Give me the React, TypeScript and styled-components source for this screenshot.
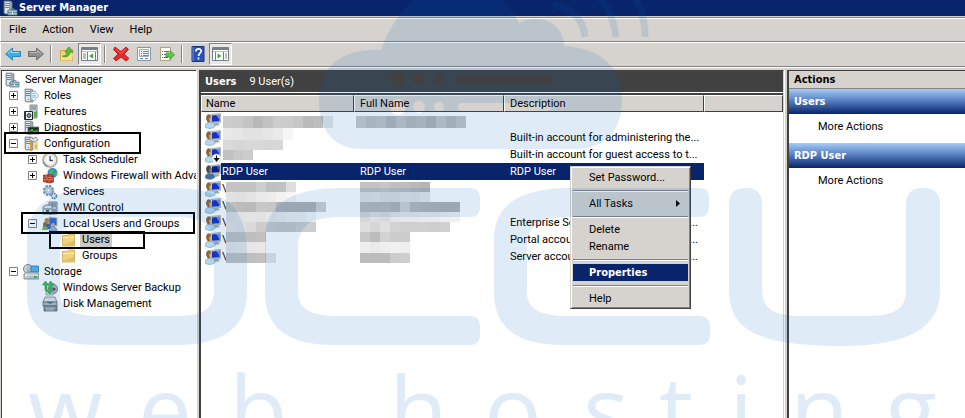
import React from 'react';
import styled, { createGlobalStyle, css } from 'styled-components';

const face = '#d6d3ce';
const navy = '#08246b';
const shadow = '#848284';
const dark = '#424142';
const boldFont = 'Tahoma, "DejaVu Sans Condensed", "DejaVu Sans", sans-serif';

const GlobalStyle = createGlobalStyle`
  *, *::before, *::after { box-sizing: border-box; }
  body { margin: 0; background: ${face}; }
  body, button { font: 11px/16px Tahoma, Roboto, sans-serif; color: #000; }
  button { margin: 0; padding: 0; border: 0; background: none; text-align: left; }
  ul { list-style: none; margin: 0; padding: 0; }
  h1, h2, h3 { margin: 0; font-size: 11px; font-weight: bold; font-family: ${boldFont}; }
`;

const Window = styled.div`
  position: relative;
  display: flex;
  flex-direction: column;
  height: 100vh;
  overflow: hidden;
  background: ${face};
`;

const TitleBar = styled.header`
  display: flex;
  align-items: center;
  flex: none;
  gap: 1px;
  height: 16px;
  padding-left: 2px;
  color: #fff;
  background: ${navy};
  overflow: hidden;
  h1 { line-height: 14px; }
`;

const MenuBar = styled.nav`
  display: flex;
  flex: none;
  align-items: center;
  gap: 16px;
  height: 24px;
  margin-top: 1px;
  padding-left: 8px;
  border-top: 1px solid ${shadow};
  border-left: 1px solid #fff;
  box-shadow: inset 0 1px #fff;
`;

const ToolBar = styled.div`
  display: flex;
  flex: none;
  align-items: center;
  height: 26px;
  border-top: 1px solid ${shadow};
  border-bottom: 1px solid ${shadow};
  border-left: 1px solid #fff;
  box-shadow: inset 0 1px #fff, 0 1px #fff;
`;

const ToolButton = styled.button<{ $pressed?: boolean }>`
  display: flex;
  align-items: center;
  justify-content: center;
  width: 23px;
  height: 22px;
  ${p => p.$pressed && css`
    border: 1px solid;
    border-color: ${shadow} #fff #fff ${shadow};
    background: #ebe9e6;
  `}
`;

const ToolSeparator = styled.span`
  width: 2px;
  height: 18px;
  margin: 0 3px;
  border-left: 1px solid ${shadow};
  border-right: 1px solid #fff;
`;

const Panes = styled.main`
  display: flex;
  flex: 1;
  min-height: 0;
  gap: 3px;
  padding: 3px 0 0 1px;
`;

const Pane = styled.section`
  border-top: 1px solid ${dark};
  border-left: 1px solid ${dark};
  background: #fff;
  overflow: hidden;
`;

const TreePane = styled(Pane)`
  flex: none;
  width: 195px;
  padding-top: 1px;
  box-shadow: 1px 0 #fff;
`;

const ListPane = styled(Pane)`
  flex: 1;
  min-width: 0;
  border-left-width: 2px;
  border-right: 1px solid ${face};
  box-shadow: 1px 0 #fff;
  position: relative;
`;

const ActionsPane = styled(Pane)`
  flex: none;
  width: 178px;
  border-left-width: 2px;
  h2 {
    height: 18px;
    padding-left: 5px;
    line-height: 18px;
    background: ${face};
    border-bottom: 1px solid ${shadow};
  }
`;

const TreeRow = styled.li<{ $level: number }>`
  position: relative;
  display: flex;
  align-items: center;
  height: 16px;
  padding-left: ${p => [2, 7, 26, 59][p.$level]}px;
  white-space: nowrap;
`;

const Expander = styled.button`
  flex: none;
  width: 9px;
  height: 9px;
  margin: 0 5px 1px 0;
  svg { display: block; }
`;

const ExpanderSpace = styled.span`
  flex: none;
  width: 14px;
`;

const TreeIcon = styled.span`
  flex: none;
  width: 16px;
  height: 16px;
  svg { display: block; }
`;

const TreeLabel = styled.span<{ $selected?: boolean }>`
  margin-left: 3px;
  padding: 0 2px;
  line-height: 14px;
  background: ${p => (p.$selected ? '#c9c9c9' : 'transparent')};
`;

const Highlight = styled.span<{ $left: number; $width: number; $height: number }>`
  position: absolute;
  z-index: 1;
  top: ${p => (p.$height > 20 ? -4 : -1)}px;
  left: ${p => p.$left}px;
  width: ${p => p.$width}px;
  height: ${p => p.$height}px;
  border: 2px solid #000;
`;

const ListHeader = styled.div`
  display: flex;
  align-items: center;
  gap: 13px;
  height: 22px;
  padding-left: 4px;
  color: #fff;
  background: ${dark};
  border-bottom: 1px solid #fff;
`;

const UserTable = styled.table`
  width: 100%;
  table-layout: fixed;
  border-collapse: separate;
  border-spacing: 0;
  border-top: 2px solid ${dark};
  th {
    height: 17px;
    padding: 0 5px;
    font-weight: normal;
    text-align: left;
    background: ${face};
    border: 1px solid;
    border-color: #fff ${dark} ${dark} #fff;
    line-height: 15px;
  }
  th:first-child { padding-left: 4px; }
  td {
    height: 17px;
    padding: 1px 6px 0;
    white-space: nowrap;
    overflow: hidden;
  }
  td:first-child { padding: 0 0 0 4px; }
`;

const UserRow = styled.tr<{ $selected?: boolean }>`
  ${p => p.$selected && css`
    color: #fff;
    td:nth-child(2), td:nth-child(3) { background: ${navy}; }
  `}
`;

const NameCell = styled.div<{ $selected?: boolean }>`
  display: flex;
  align-items: center;
  height: 17px;
  svg { flex: none; display: block; }
  span {
    flex: 1;
    height: 17px;
    padding: 1px 0 0 1px;
    background: ${p => (p.$selected ? navy : 'transparent')};
  }
`;

const Description = styled.div`
  display: flex;
  justify-content: space-between;
`;

const MosaicLayer = styled.svg`
  position: absolute;
  top: 41px;
  left: 0;
  pointer-events: none;
`;

const ContextMenu = styled.ul`
  position: absolute;
  z-index: 2;
  top: 95px;
  left: 369px;
  width: 121px;
  padding: 1px;
  background: ${face};
  border: 1px solid;
  border-color: ${face} ${dark} ${dark} ${face};
  box-shadow: inset 1px 1px #fff, inset -1px -1px ${shadow};
  li { padding: 0 1px; }
  li:first-child { padding-top: 1px; }
`;

const MenuItem = styled.button<{ $active?: boolean }>`
  display: flex;
  align-items: center;
  justify-content: space-between;
  width: 100%;
  height: 17px;
  padding: 0 8px 0 16px;
  ${p => p.$active && css`
    color: #fff;
    font-weight: bold;
    font-family: ${boldFont};
    background: ${navy};
  `}
`;

const MenuSeparator = styled.li`
  height: 9px;
  &::before {
    content: '';
    display: block;
    height: 5px;
    border-bottom: 1px solid ${shadow};
    box-shadow: 0 1px #fff;
  }
`;

const ActionGroup = styled.div`
  margin-bottom: 4px;
  h3 {
    height: 25px;
    padding-left: 5px;
    line-height: 26px;
    color: #fff;
    background: linear-gradient(#a5cbf7, #5a82c4 45%, ${navy});
  }
  button {
    display: block;
    width: 100%;
    height: 25px;
    padding-left: 29px;
  }
`;

const WatermarkLayer = styled.svg`
  position: absolute;
  z-index: 5;
  top: 0;
  left: 0;
  pointer-events: none;
  fill: #0061bc;
  opacity: 0.12;
  text { font: 96px "Open Sans", "Noto Sans", sans-serif; }
`;

const Icon = ({ children }: { children: React.ReactNode }) => (
  <svg width="16" height="16" viewBox="0 0 16 16" aria-hidden="true">{children}</svg>
);

const Tower = () => (
  <>
    <path d="M2 1h6l2 1v12H3l-1-1z" fill="#9aa6b0" stroke="#7d8890" strokeWidth=".7" />
    <path d="M3 2h4v11H3z" fill="#dfe6ea" />
    <path d="M3 3.500h4M3 5.500h4M3 7.500h4" stroke="#76828c" />
    <path d="M5 11h1v1H5z" fill="#3cae3c" />
  </>
);

const icons: Record<string, React.ReactNode> = {
  server: <><Tower /><path d="M6 10h9v5H6z" fill="#9fc0d3" stroke="#5f7f95" strokeWidth=".8" /><path d="M9 10V8.500h3V10M6 12.500h9" fill="none" stroke="#5f7f95" strokeWidth=".8" /><path d="M10 12h1v2h-1z" fill="#fff" /></>,
  roles: <><Tower /><path d="M8 4l4-1 3.500 5-4.500 5-3-2z" fill="#eaf4fb" stroke="#79a7c9" strokeWidth=".8" /><path d="M9 6l3-1M9 8l4-1M9 10l4-1.500" stroke="#7bb0d8" strokeWidth=".8" /></>,
  features: <><path d="M7 1h7v13H7z" fill="#cdd5da" stroke="#68747c" strokeWidth=".8" /><path d="M8 3h5M8 5h5" stroke="#66727c" /><path d="M11 8l3-1v6h-3z" fill="#58a852" /><path d="M1.500 7.500h8v8h-8z" fill="#e9eef1" stroke="#222" /><path d="M1 8h2v7H1z" fill="#333" /><circle cx="6" cy="11.500" r="2" fill="#7d95a5" stroke="#222" strokeWidth=".8" /></>,
  diagnostics: <><Tower /><path d="M5 7h11v7H5z" fill="#19391c" stroke="#777" strokeWidth=".8" /><path d="M6 11h2l1-2 2 4 1-2h3" fill="none" stroke="#4fdc4a" /></>,
  configuration: <><Tower /><path d="M6 3l2-2 2 2 3-2 2 3-3 2-3-1z" fill="#dfe5e9" stroke="#7a858d" strokeWidth=".8" /><path d="M8 6v4M8 12v3" stroke="#e79b13" strokeWidth="2" /><path d="M13 6v8" stroke="#eeb42b" strokeWidth="3" /><path d="M13 6v3M13 12v2" stroke="#fff1b8" /></>,
  scheduler: <><circle cx="8" cy="8" r="7" fill="#f2ede0" stroke="#a8a290" strokeWidth="1.500" /><circle cx="8" cy="8" r="5" fill="#fff" stroke="#d8d0b8" strokeWidth=".7" /><path d="M8 4v4.500h3" fill="none" stroke="#344e75" strokeWidth="1.300" /><path d="M1.500 10a7 7 0 0 0 4 4.500" stroke="#6c91b8" fill="none" strokeWidth="1.500" /></>,
  firewall: <><circle cx="10.500" cy="5" r="5" fill="#3286d6" /><path d="M7 3l3-2 2 2-2 3H7zM12 5l3-1v3l-2 2z" fill="#4cb748" /><path d="M1 7l7-1 4 2v6l-4 1.500L1 14z" fill="#a93420" /><path d="M1 9l11 1M1 11.500l11 .5M4 7v2M8 7v3M5 10v2M9 10v2M3 12v2M7 12v3" stroke="#e79376" strokeWidth=".7" /></>,
  services: <><circle cx="6.500" cy="6.500" r="4.500" fill="#dcebf6" stroke="#7497b7" strokeWidth="2.500" strokeDasharray="2.500 1" /><circle cx="6.500" cy="6.500" r="3.500" fill="#c3dcf0" stroke="#7497b7" strokeWidth=".8" /><circle cx="6.500" cy="6.500" r="1.500" fill="#fff" stroke="#6589aa" strokeWidth=".6" /><circle cx="12" cy="12" r="2.500" fill="#d5e6f3" stroke="#6589aa" strokeWidth="1.800" strokeDasharray="1.500 .8" /></>,
  wmi: <><path d="M7 2h8v12H7z" fill="#c3ccd2" stroke="#5e6a72" strokeWidth=".8" /><path d="M9 4h5M9 6h5" stroke="#5e6a72" /><path d="M1 7l3-2h6v9H1z" fill="#e4e9ec" stroke="#59656e" strokeWidth=".8" /><path d="M2 9h7" stroke="#59656e" /><path d="M4 10h3v3H4z" fill="#52616c" /><path d="M11 9h3v4h-3z" fill="#6fa6cb" /></>,
  group: <><path d="M7 1l8 1v8l-8-1z" fill="#3868d0" stroke="#b9c2cb" /><circle cx="5" cy="4.500" r="2.500" fill="#bb8545" /><path d="M1 11c0-5 8-5 8 0v2H1z" fill="#3f5fae" /><circle cx="3" cy="8" r="2" fill="#8a6a2e" /><path d="M0 14c0-5 6-5 6 0z" fill="#8bae58" /><circle cx="11" cy="9" r="2" fill="#d9a867" /><path d="M7 15c0-6 8-6 8 0z" fill="#91b6d8" stroke="#5379a0" strokeWidth=".5" /></>,
  folder: <><path d="M1.500 3.500h5l1-1.500h6v12h-12z" fill="#ecd27f" stroke="#d0b565" /><path d="M2 5.500h11" stroke="#fff2bd" /><path d="M2 13h11V9z" fill="#e0bd60" /></>,
  storage: <><circle cx="5" cy="5" r="4.500" fill="#ccd5db" stroke="#79868f" /><circle cx="5" cy="5" r="1.300" fill="#fff" stroke="#79868f" strokeWidth=".6" /><path d="M8 2h7.500v6H8z" fill="#55b5e8" stroke="#2f7aac" strokeWidth=".8" /><path d="M1 10l2-2h11l2 2v5H1z" fill="#c9ced0" stroke="#71797e" strokeWidth=".8" /><path d="M2 11h13" stroke="#fff" /><path d="M11 12h3v2h-3z" fill="#45b948" /></>,
  backup: <><ellipse cx="11" cy="9" rx="4.500" ry="5" fill="#b9b5c6" stroke="#736f82" strokeWidth=".8" /><circle cx="12" cy="9" r="1.500" fill="#4f4b5c" /><path d="M4 10h7v5H4z" fill="#d7e0e5" stroke="#8a959c" strokeWidth=".8" /><path d="M3 10V5H.5L3.500 1l3 4H5v5l2 2V5H6L8.500 1 12 5h-2v7l-2 2z" fill="#42c04c" stroke="#25913a" strokeWidth=".6" /></>,
  disk: <><path d="M3 1h10l2 5H1z" fill="#e1e4e6" stroke="#777f84" strokeWidth=".8" /><path d="M1 6h14v4H1z" fill="#b6bdc1" stroke="#626a6f" strokeWidth=".8" /><path d="M5 6c1 2 5 2 6 0" fill="#4f6a7c" /><path d="M2 10h13v5H2z" fill="#898f93" stroke="#5b6266" strokeWidth=".8" /><path d="M3 12h10M4 14h8" stroke="#e3e7e9" strokeWidth=".7" /></>,
};

const UserIcon = ({ selected, disabled }: { selected?: boolean; disabled?: boolean }) => (
  <Icon>
    <path d="M5.500 1.500l10-1v9l-9.500.5z" fill="#d3cfc2" stroke="#a6a89f" strokeWidth=".8" />
    <path d="M7 2.500l7.500-.7v6.500L7 8.800z" fill={selected ? '#0a1e8e' : '#1233c8'} />
    <path d="M11 2l3.500-.2v5z" fill={selected ? '#2e52ae' : '#6d92f0'} />
    <path d="M9 10h4l2 2-5 1z" fill="#a2ad9c" />
    <path d="M1 6c0-6 5-6 5-1v4L3 10z" fill={selected ? '#4e4a50' : '#86683a'} />
    <path d="M4 5l3-1v4l-2 1.500z" fill={selected ? '#8b7a6c' : '#e2ae6c'} />
    <path d="M0 14c0-4 3-5 6-4.500 3 0 4 2 4 4-3 2.500-7 2.500-10 .5z" fill={selected ? '#486a9c' : '#b4d5ee'} stroke="#7aa2c8" strokeWidth=".7" />
    {disabled && <><circle cx="11.500" cy="11.500" r="4.500" fill="#fff" stroke="#bbb" strokeWidth=".5" /><path d="M11.500 8.500v4M9.500 11.500l2 2.500 2-2.500z" stroke="#111" strokeWidth="1.200" /></>}
  </Icon>
);

const Arrow = ({ back }: { back?: boolean }) => (
  <Icon>
    <path
      d={back ? 'M.5 8l7-6v3.500h8v5h-8V14z' : 'M15.500 8l-7-6v3.500h-8v5h8V14z'}
      fill={back ? '#39aee8' : '#8f8f8f'}
      stroke={back ? '#2b86bd' : '#6e6e6e'}
    />
    <path d={back ? 'M3 7.500l3.500-3v2H14' : 'M2 6.500h7.500v-2l3.500 3'} fill="none" stroke={back ? '#9de2fb' : '#bbb'} />
  </Icon>
);

const PaneIcon = ({ flip }: { flip?: boolean }) => (
  <svg width="17" height="16" viewBox="0 0 17 16" aria-hidden="true">
    <path d="M.5 1.500h16v13H.5z" fill="#fff" stroke="#74818a" />
    <path d="M1 3h15" stroke="#74818a" strokeWidth="2" />
    <path d="M1 5.500h15" stroke="#b9c2c8" />
    {flip
      ? <><path d="M11.500 6v8M3.500 6v8" stroke="#74818a" /><path d="M5.500 7.500v5l4-2.500z" fill="#36ae36" /><path d="M13 8h2M13 10h2M13 12h2" stroke="#74818a" /></>
      : <><path d="M6.500 6v8M14.500 6v8" stroke="#74818a" /><path d="M12 7.500v5L8 10z" fill="#36ae36" /><path d="M2 8h3M2 10h3M2 12h3" stroke="#74818a" /></>}
  </svg>
);

type Node = { label: string; icon: string; level: number; open?: boolean; selected?: boolean; mark?: [number, number, number] };

const tree: Node[] = [
  { label: 'Server Manager', icon: 'server', level: 0 },
  { label: 'Roles', icon: 'roles', level: 1, open: false },
  { label: 'Features', icon: 'features', level: 1, open: false },
  { label: 'Diagnostics', icon: 'diagnostics', level: 1, open: false },
  { label: 'Configuration', icon: 'configuration', level: 1, open: true, mark: [2, 137, 22] },
  { label: 'Task Scheduler', icon: 'scheduler', level: 2, open: false },
  { label: 'Windows Firewall with Adva', icon: 'firewall', level: 2, open: false },
  { label: 'Services', icon: 'services', level: 2 },
  { label: 'WMI Control', icon: 'wmi', level: 2 },
  { label: 'Local Users and Groups', icon: 'group', level: 2, open: true, mark: [19, 174, 22] },
  { label: 'Users', icon: 'folder', level: 3, selected: true, mark: [47, 96, 18] },
  { label: 'Groups', icon: 'folder', level: 3 },
  { label: 'Storage', icon: 'storage', level: 1, open: true },
  { label: 'Windows Server Backup', icon: 'backup', level: 2 },
  { label: 'Disk Management', icon: 'disk', level: 2 },
];

type User = { name?: string; fullName?: string; description?: string; cut?: boolean; selected?: boolean; disabled?: boolean };

const users: User[] = [
  {},
  { description: 'Built-in account for administering the...' },
  { description: 'Built-in account for guest access to t...', disabled: true },
  { name: 'RDP User', fullName: 'RDP User', description: 'RDP User', selected: true },
  { name: '\\' },
  { name: '\\' },
  { name: '\\', description: 'Enterprise Se', cut: true },
  { name: '\\', description: 'Portal accou', cut: true },
  { name: '\\', description: 'Server accou', cut: true },
];

/* Pixelated strips that hide account names: x, y, height, then one grey level per 10px cell. */
const strips: [number, number, number, number[]][] = [
  [22, 4, 12, [204, 202, 196, 184, 194, 204, 203, 198, 186, 188, 230]],
  [22, 16, 12, [232, 230, 226, 226, 230, 234, 246]],
  [22, 28, 10, [218, 214, 216, 216, 214, 216]],
  [22, 38, 10, [192, 200, 204]],
  [155, 4, 12, [202, 192, 196, 182, 196, 186, 190, 180, 198, 186, 196]],
  [25, 70, 10, [196, 196, 196, 206, 192, 194, 222]],
  [25, 80, 10, [226, 224, 228, 234, 236, 242, 246]],
  [25, 90, 10, [190, 188, 186, 200, 198, 178, 176, 178, 178, 208]],
  [25, 100, 10, [222, 226, 228, 226, 230, 234, 238, 238, 244]],
  [25, 110, 10, [224, 222, 218, 204, 202, 198, 198, 204, 206]],
  [25, 120, 10, [194, 194, 190, 192]],
  [25, 130, 11, [228, 230, 230, 232]],
  [25, 141, 10, [192, 194, 190, 194, 228]],
  [159, 70, 10, [194, 194, 198, 192, 190, 184, 180]],
  [159, 80, 10, [226, 228, 222, 222, 228, 226, 232]],
  [159, 90, 10, [186, 184, 186, 180, 208, 184, 182, 180, 178, 178]],
  [159, 100, 10, [214, 222, 218, 228, 232, 232, 234, 234, 238, 240]],
  [159, 110, 10, [222, 214, 224, 210, 208, 208, 208, 206, 208]],
  [159, 120, 10, [200, 188, 210, 204, 204]],
  [159, 130, 11, [238, 234, 238, 240, 238]],
  [159, 141, 10, [188, 188, 188, 204, 206]],
];

const Mosaic = () => (
  <MosaicLayer width="300" height="154" aria-hidden="true">
    {strips.map(([x, y, h, levels]) =>
      levels.map((v, i) => (
        <rect key={`${x}-${y}-${i}`} x={x + i * 10} y={y} width="10" height={h} fill={`rgb(${v},${v},${v})`} />
      )),
    )}
  </MosaicLayer>
);

const Watermark = () => (
  <WatermarkLayer width="965" height="418" viewBox="0 0 965 418" aria-hidden="true">
    <path
      fillRule="evenodd"
      d="M381 50C392 18 418-16 460-16C488-16 508 0 519 23C540 12 564 24 564 46C602 48 622 68 622 100C622 130 606 149 574 149H362C334 149 319 130 319 102C319 66 342 48 381 50Z
        M390 79a8 8 0 1 0 16 0a8 8 0 1 0-16 0ZM413 79a6 6 0 1 0 12 0a6 6 0 1 0-12 0ZM434 79a5 5 0 1 0 10 0a5 5 0 1 0-10 0Z
        M462 75h85a4 4 0 0 1 0 8h-85a4 4 0 0 1 0-8Z
        M390 107a8 8 0 1 0 16 0a8 8 0 1 0-16 0ZM413 107a6 6 0 1 0 12 0a6 6 0 1 0-12 0ZM434 107a5 5 0 1 0 10 0a5 5 0 1 0-10 0Z
        M462 103h85a4 4 0 0 1 0 8h-85a4 4 0 0 1 0-8Z"
    />
    <path d="M553 5C570 6 583 18 585 37M592-10C606 2 614 16 616 37M632-10C640 6 645 18 645 37" fill="none" stroke="#0061bc" strokeWidth="7" />
    <path
      fillRule="evenodd"
      d="M104 188H171C222 188 247 204 247 252V292C247 328 222 345 176 345H98C52 345 27 330 27 295V240C27 205 53 188 104 188Z
        M104 217C72 217 60 226 60 248V293C60 310 73 316 100 316H178C204 316 214 308 214 290V245C214 224 202 217 175 217Z"
    />
    <path d="M342 188H470Q480 188 480 198V207Q480 217 470 217H342C310 217 298 226 298 248V292C298 309 310 316 340 316H470Q480 316 480 327V335Q480 345 469 345H335C289 345 265 329 265 292V240C265 205 290 188 342 188Z" />
    <path d="M571 188H699Q709 188 709 198V207Q709 217 699 217H571C539 217 527 226 527 248V292C527 309 539 316 569 316H699Q710 316 710 327V335Q710 345 699 345H564C518 345 494 329 494 292V240C494 205 519 188 571 188Z" />
    <path d="M729 204Q729 188 746 188Q762 188 762 204V290C762 309 774 316 802 316H866C895 316 906 309 906 290V204Q906 188 923 188Q940 188 940 204V290C940 328 908 345 846 346C765 346 729 334 729 290Z" />
    <text y="445" x="28 138 229 389 484 583 659 729 790 885">webhosting</text>
  </WatermarkLayer>
);

export default function App() {
  return (
    <>
      <GlobalStyle />
      <Window>
        <TitleBar>
          <Icon>{icons.server}</Icon>
          <h1>Server Manager</h1>
        </TitleBar>
        <MenuBar>
          {['File', 'Action', 'View', 'Help'].map(m => <button key={m}>{m}</button>)}
        </MenuBar>
        <ToolBar role="toolbar">
          <ToolButton aria-label="Back"><Arrow back /></ToolButton>
          <ToolButton aria-label="Forward"><Arrow /></ToolButton>
          <ToolSeparator />
          <ToolButton aria-label="Up one level">
            <Icon><path d="M1.500 4.500h6l1-1h5v11h-12z" fill="#f3cf67" stroke="#d0ab4b" /><path d="M2 8h12l-1 6.500H2z" fill="#f9e08e" /><path d="M3 10c3 0 5-1 5-4H6l4-5 4 5h-3c0 4-4 6-8 4z" fill="#55c52e" stroke="#31861b" strokeWidth=".7" /></Icon>
          </ToolButton>
          <ToolButton $pressed aria-label="Show console tree" aria-pressed="true"><PaneIcon /></ToolButton>
          <ToolSeparator />
          <ToolButton aria-label="Delete">
            <Icon><path d="M2 1l6 4.500L13 1l2.500 2.500L11 8l5 4.500-3 2.500-5-4-5 4-2.500-2.500L5 8 .5 3.500z" fill="#e8262b" stroke="#b8181c" strokeWidth=".9" strokeLinejoin="round" /><path d="M3 3l5 4.500L13 3" fill="none" stroke="#f8665f" /></Icon>
          </ToolButton>
          <ToolButton aria-label="Properties">
            <Icon><path d="M1.500 1.500h13v13h-13z" fill="#fff" stroke="#8696a4" /><path d="M3.500 3.500h9v7h-9z" fill="#eef4f8" stroke="#9cadba" /><path d="M5 5.500h1M7 5.500h5M5 7.500h1M7 7.500h5M5 9.500h1M7 9.500h5M4 12.500h3M9 12.500h3" stroke="#6286a5" /></Icon>
          </ToolButton>
          <ToolButton aria-label="Export list">
            <Icon><path d="M1.500 1.500h10v13h-10z" fill="#fffef0" stroke="#a8a48c" /><path d="M3 5.500h1M5 5.500h5M3 8.500h1M5 8.500h3M3 11.500h1M5 11.500h4" stroke="#54638c" /><path d="M7 7h4V4.500L15.500 9 11 13.500V11H7z" fill="#5dca3d" stroke="#36902a" strokeWidth=".7" /></Icon>
          </ToolButton>
          <ToolSeparator />
          <ToolButton aria-label="Help">
            <Icon><path d="M2 .5h12v15H2z" fill="#2d50b8" stroke="#1b347f" /><path d="M3 1v14" stroke="#6b8be0" /><path d="M5.800 5.500c0-3.500 5.400-3.500 5.400-.5 0 2-2.700 2.300-2.700 5M8.500 11.500v2" fill="none" stroke="#fff" strokeWidth="1.700" /></Icon>
          </ToolButton>
          <ToolButton $pressed aria-label="Show action pane" aria-pressed="true"><PaneIcon flip /></ToolButton>
        </ToolBar>

        <Panes>
          <TreePane aria-label="Console tree">
            <ul>
              {tree.map(n => (
                <TreeRow key={n.label} $level={n.level}>
                  {n.open !== undefined ? (
                    <Expander aria-label={`${n.open ? 'Collapse' : 'Expand'} ${n.label}`} aria-expanded={n.open}>
                      <svg width="9" height="9" viewBox="0 0 9 9">
                        <path d="M.5.5h8v8h-8z" fill="#fff" stroke={shadow} />
                        <path d={n.open ? 'M2 4.500h5' : 'M2 4.500h5M4.500 2v5'} stroke="#000" />
                      </svg>
                    </Expander>
                  ) : (n.level === 2 && <ExpanderSpace />)}
                  <TreeIcon><Icon>{icons[n.icon]}</Icon></TreeIcon>
                  <TreeLabel $selected={n.selected}>{n.label}</TreeLabel>
                  {n.mark && <Highlight $left={n.mark[0]} $width={n.mark[1]} $height={n.mark[2]} />}
                </TreeRow>
              ))}
            </ul>
          </TreePane>

          <ListPane>
            <ListHeader><h2>Users</h2><span>9 User(s)</span></ListHeader>
            <UserTable>
              <colgroup><col width="153" /><col width="150" /><col width="200" /><col /></colgroup>
              <thead>
                <tr><th>Name</th><th>Full Name</th><th>Description</th><th aria-label="Empty" /></tr>
              </thead>
              <tbody>
                {users.map((u, i) => (
                  <UserRow key={i} $selected={u.selected}>
                    <td>
                      <NameCell $selected={u.selected}>
                        <UserIcon selected={u.selected} disabled={u.disabled} />
                        <span>{u.name}</span>
                      </NameCell>
                    </td>
                    <td>{u.fullName}</td>
                    <td><Description><span>{u.description}</span>{u.cut && <span>...</span>}</Description></td>
                    <td />
                  </UserRow>
                ))}
              </tbody>
            </UserTable>
            <Mosaic />
            <ContextMenu role="menu">
              <li><MenuItem role="menuitem">Set Password...</MenuItem></li>
              <MenuSeparator />
              <li>
                <MenuItem role="menuitem">
                  All Tasks
                  <svg width="4" height="7" viewBox="0 0 4 7" aria-hidden="true"><path d="M0 0v7l4-3.500z" /></svg>
                </MenuItem>
              </li>
              <MenuSeparator />
              <li><MenuItem role="menuitem">Delete</MenuItem></li>
              <li><MenuItem role="menuitem">Rename</MenuItem></li>
              <MenuSeparator />
              <li><MenuItem role="menuitem" $active>Properties</MenuItem></li>
              <MenuSeparator />
              <li><MenuItem role="menuitem">Help</MenuItem></li>
            </ContextMenu>
          </ListPane>

          <ActionsPane>
            <h2>Actions</h2>
            <ActionGroup><h3>Users</h3><button>More Actions</button></ActionGroup>
            <ActionGroup><h3>RDP User</h3><button>More Actions</button></ActionGroup>
          </ActionsPane>
        </Panes>
        <Watermark />
      </Window>
    </>
  );
}
